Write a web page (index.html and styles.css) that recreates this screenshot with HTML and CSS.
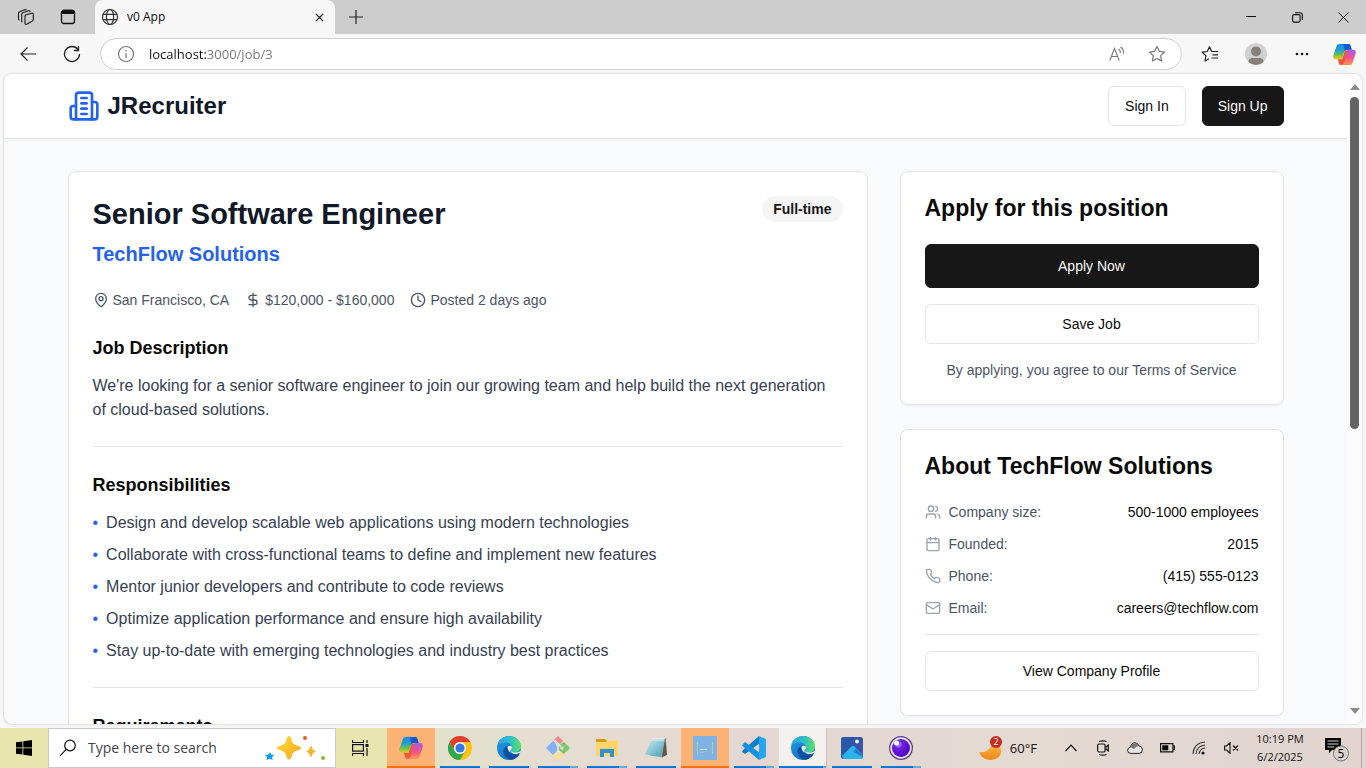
FILE: index.html
```html
<!DOCTYPE html>
<html lang="en">
<head>
<meta charset="utf-8">
<title>v0 App</title>
<link rel="stylesheet" href="styles.css">
</head>
<body>
<svg class="defs" aria-hidden="true">
  <defs>
    <linearGradient id="cpA" x1="0" y1="0" x2="0" y2="1"><stop offset="0" stop-color="#1489e8"/><stop offset=".4" stop-color="#1f9fd0"/><stop offset=".7" stop-color="#6dc04b"/><stop offset="1" stop-color="#f2c81e"/></linearGradient>
    <linearGradient id="cpB" x1="0" y1="1" x2="0" y2="0"><stop offset="0" stop-color="#ff9a4d"/><stop offset=".45" stop-color="#f6508a"/><stop offset="1" stop-color="#a35bf0"/></linearGradient>
    <linearGradient id="edA" x1="0" y1="0" x2="1" y2="0"><stop offset="0" stop-color="#2aa5e3"/><stop offset=".55" stop-color="#2fc0c8"/><stop offset="1" stop-color="#5fe05a"/></linearGradient>
    <linearGradient id="edB" x1="0" y1="0" x2="1" y2="1"><stop offset="0" stop-color="#1f9be4"/><stop offset="1" stop-color="#1166bd"/></linearGradient>
    <linearGradient id="note" x1="0" y1="0" x2="1" y2="1"><stop offset="0" stop-color="#d4eef2"/><stop offset="1" stop-color="#3d9db5"/></linearGradient>
    <linearGradient id="pic" x1="0" y1="0" x2="1" y2="1"><stop offset="0" stop-color="#1e5aa8"/><stop offset="1" stop-color="#4b4ca8"/></linearGradient>
    <linearGradient id="moon" x1="0" y1="0" x2="0" y2="1"><stop offset="0" stop-color="#f9c13c"/><stop offset="1" stop-color="#f0851c"/></linearGradient>
    <linearGradient id="gold" x1="0" y1="0" x2="1" y2="1"><stop offset="0" stop-color="#ffdc3d"/><stop offset="1" stop-color="#f3a71c"/></linearGradient>
    <radialGradient id="orb" cx=".35" cy=".3" r=".8"><stop offset="0" stop-color="#b9a0ff"/><stop offset=".3" stop-color="#6d1fe0"/><stop offset="1" stop-color="#4a00b8"/></radialGradient>
    <symbol id="copilot" viewBox="0 0 24 24">
      <path d="M15 22l-6.500 1c-1.500 0-2-.8-2.400-2L5 16.500h4.500l3-9H17z" fill="#f0563c"/>
      <path d="M7 1h9c1.500 0 2 .8 2.400 2l1.200 4H15c-2 0-2.800 1-3.300 2.600L9.500 17H3C.5 17-.3 15 .5 12.500L3.500 4C4.200 2 5 1 7 1z" fill="url(#cpA)"/>
      <path d="M11 1h5c1.500 0 2 .8 2.400 2l1.200 4H15c-1.300 0-2.200.5-2.700 1.300z" fill="#1259cf"/>
      <path d="M17 23H8c3 0 3.500-2 4.200-4.500l2.600-9C15.300 7.800 16 7 17.500 7H21c2.500 0 3.300 2 2.500 4.500L20.500 20c-.7 2-1.500 3-3.500 3z" fill="url(#cpB)"/>
    </symbol>
    <symbol id="edge" viewBox="0 0 24 24">
      <circle cx="12" cy="12" r="12" fill="url(#edB)"/>
      <path d="M.5 8.500C2 3.500 6.600 0 12 0c7 0 12 5 12 10.500 0 3.500-2.600 6-6 6-2.600 0-4-1-4-2 0-.8 1-1.200 1-3C15 8.500 12 6.500 8.500 6.500 5 6.500 2 7.500.5 8.500z" fill="url(#edA)"/>
      <path d="M9.500 10.500c-3 1.500-4 5-2.300 8.200 1.300 2.700 3.800 4.600 7 5.100 3.400-.6 6.400-2.700 8.300-5.600.3-.5-.2-.9-.8-.6-3.700 1.700-8 .9-10.200-2.100-1.200-1.500-1.500-3.400-.7-4.700z" fill="#0d4f9e"/>
      <path d="M14.500 12.500c-.8 1-1 3 .3 4.300 1.700 1.500 4.700 1.800 8.300 0l.7-2.300c-1.500 1.500-3.500 2-5.800 2-2.600 0-4-1-4-2 0-.6.500-1 .5-2z" fill="#f1f3ee"/>
      <path d="M10.500 11q2-2 4.400-.5.300 1.500-.9 3-1.200 1.500-.5 3-2.500-1.200-3-5.500z" fill="#f1f3ee"/>
    </symbol>
  </defs>
</svg>

<div class="tabstrip">
  <button class="strip-btn" aria-label="Workspaces"><svg width="18" height="18" viewBox="0 0 18 18" fill="none" stroke="#1b1b1b" stroke-width="1.100" stroke-linejoin="round"><path d="M8.500 7l6-1.800q1.800-.5 1.800 1.300v5q0 1-.9 1.600l-5.200 3Q8 17 8 15.200V8.500Q8 7.400 8.500 7zM5.300 14.300l-.6-.8V6.500q0-1.300 1.200-1.700l5.600-2q1.300-.3 1.800.9M2.300 12.300l-.8-.8v-6q0-1.300 1.200-1.700l4.800-2q1.500-.4 2.100.4"/></svg></button>
  <button class="strip-btn" aria-label="Tab actions"><svg width="16" height="16" viewBox="0 0 16 16" fill="none" stroke="#111" stroke-width="1.300"><rect x="1.500" y="1.500" width="13" height="13" rx="2.500"/><path d="M1.500 4q0-2.500 2.500-2.500h8q2.500 0 2.500 2.500v.3h-13z" fill="#111"/></svg></button>
  <div class="tab">
    <svg width="18" height="18" viewBox="0 0 18 18" fill="none" stroke="#333" stroke-width="1.200"><circle cx="9" cy="9" r="7.500"/><ellipse cx="9" cy="9" rx="3.600" ry="7.500"/><path d="M2 6.300h14M2 11.700h14"/></svg>
    <span class="tab-title">v0 App</span>
    <button class="icon-btn" aria-label="Close tab"><svg width="9" height="9" viewBox="0 0 10 10" stroke="#111" stroke-width="1.400"><path d="M1 1l8 8M9 1L1 9"/></svg></button>
  </div>
  <button class="strip-btn" aria-label="New tab"><svg width="14" height="14" viewBox="0 0 14 14" stroke="#222" stroke-width="1.200"><path d="M7 0v14M0 7h14"/></svg></button>
  <div class="window-btns">
    <button aria-label="Minimize"><svg width="10" height="10" viewBox="0 0 10 10" stroke="#111"><path d="M0 4.500h10"/></svg></button>
    <button aria-label="Restore"><svg width="11" height="11" viewBox="0 0 11 11" fill="none" stroke="#111" stroke-width="1.100"><rect x=".6" y="2.600" width="7.500" height="7.500" rx="1.500"/><path d="M3 .7h5q2.300 0 2.300 2.300v5"/></svg></button>
    <button aria-label="Close"><svg width="11" height="11" viewBox="0 0 11 11" stroke="#111"><path d="M.5.500l10 10M10.500.500l-10 10"/></svg></button>
  </div>
</div>

<div class="toolbar">
  <button class="nav-btn" aria-label="Back"><svg width="16" height="14" viewBox="0 0 16 14" fill="none" stroke="#222" stroke-width="1.200"><path d="M16 7H1M7.500.5L1 7l6.500 6.500"/></svg></button>
  <button class="nav-btn" aria-label="Refresh"><svg width="18" height="18" viewBox="0 0 18 18" fill="none" stroke="#222" stroke-width="1.300"><path d="M15 4.500A7.500 7.500 0 1 0 16.500 9M15.500 1v4.500H11"/></svg></button>
  <div class="address">
    <svg width="18" height="18" viewBox="0 0 18 18" fill="none" stroke="#777" stroke-width="1.200"><circle cx="9" cy="9" r="7.500"/><path d="M9 8v5M9 5v1.500"/></svg>
    <input class="url" type="text" aria-label="Address" value="localhost:3000/job/3">
    <button class="icon-btn" aria-label="Read aloud"><svg width="16" height="16" viewBox="0 0 16 16" fill="none" stroke="#777" stroke-width="1.100"><path d="M.8 14.500L5.500 2.500l4.700 12M2.500 10.500h6M9.500 3q2 1.200 2 4M11.500 1Q15 3.200 14.500 7.500"/></svg></button>
    <button class="icon-btn" aria-label="Add to favorites"><svg width="18" height="18" viewBox="0 0 18 18" fill="none" stroke="#777" stroke-width="1.200" stroke-linejoin="round"><path d="M9 1.500l2.300 4.800 5.200.7-3.800 3.600.9 5.400L9 13.500 4.400 16l.9-5.400L1.500 7l5.200-.7z"/></svg></button>
  </div>
  <div class="tools">
    <button aria-label="Favorites"><svg width="18" height="18" viewBox="0 0 18 18" fill="none" stroke="#222" stroke-width="1.200" stroke-linejoin="round"><path d="M17 6.500h-6.200L8.500 1.800 6.300 6.500 1.200 7.200l3.700 3.600-.9 5.200 4-2.200M11.500 9.800H17M10.500 13H17"/></svg></button>
    <button aria-label="Profile"><svg width="22" height="22" viewBox="0 0 22 22"><circle cx="11" cy="11" r="11" fill="#d2d0ce"/><circle cx="11" cy="8.500" r="5" fill="#85807c"/><path d="M3.500 19q0-4 3.500-4h8q3.500 0 3.500 4A11 11 0 0 1 3.500 19z" fill="#85807c"/></svg></button>
    <button aria-label="Settings and more"><svg width="14" height="4" viewBox="0 0 14 4" fill="#111"><circle cx="2" cy="2" r="1.300"/><circle cx="7" cy="2" r="1.300"/><circle cx="12" cy="2" r="1.300"/></svg></button>
    <button class="copilot-btn" aria-label="Copilot"><svg width="23" height="23"><use href="#copilot"/></svg></button>
  </div>
</div>

<div class="viewport">
  <div class="page">
    <header class="site-header">
      <div class="container header-row">
        <a class="brand" href="#"><svg class="lucide" width="32" height="32" viewBox="0 0 24 24"><path d="M6 22V4a2 2 0 0 1 2-2h8a2 2 0 0 1 2 2v18Z"/><path d="M6 12H4a2 2 0 0 0-2 2v6a2 2 0 0 0 2 2h2M18 9h2a2 2 0 0 1 2 2v9a2 2 0 0 1-2 2h-2M10 6h4M10 10h4M10 14h4M10 18h4"/></svg><span>JRecruiter</span></a>
        <div class="auth"><button class="btn">Sign In</button><button class="btn btn-dark">Sign Up</button></div>
      </div>
    </header>
    <main class="container layout">
      <article class="card job">
        <div class="job-head">
          <div><h1>Senior Software Engineer</h1><p class="company">TechFlow Solutions</p></div>
          <span class="badge">Full-time</span>
        </div>
        <ul class="meta">
          <li><svg class="lucide" width="16" height="16" viewBox="0 0 24 24"><path d="M20 10c0 4.993-5.539 10.193-7.399 11.799a1 1 0 0 1-1.202 0C9.539 20.193 4 14.993 4 10a8 8 0 0 1 16 0"/><circle cx="12" cy="10" r="3"/></svg>San Francisco, CA</li>
          <li><svg class="lucide" width="16" height="16" viewBox="0 0 24 24"><path d="M12 2v20M17 5H9.500a3.500 3.500 0 0 0 0 7h5a3.500 3.500 0 0 1 0 7H6"/></svg>$120,000 - $160,000</li>
          <li><svg class="lucide" width="16" height="16" viewBox="0 0 24 24"><circle cx="12" cy="12" r="10"/><path d="M12 6v6l4 2"/></svg>Posted 2 days ago</li>
        </ul>
        <section><h2>Job Description</h2><p>We're looking for a senior software engineer to join our growing team and help build the next generation of cloud-based solutions.</p></section>
        <hr>
        <section><h2>Responsibilities</h2>
          <ul class="bullets">
            <li>Design and develop scalable web applications using modern technologies</li>
            <li>Collaborate with cross-functional teams to define and implement new features</li>
            <li>Mentor junior developers and contribute to code reviews</li>
            <li>Optimize application performance and ensure high availability</li>
            <li>Stay up-to-date with emerging technologies and industry best practices</li>
          </ul>
        </section>
        <hr>
        <section><h2>Requirements</h2></section>
      </article>
      <aside class="side">
        <section class="card">
          <h2 class="card-title">Apply for this position</h2>
          <div class="actions">
            <button class="btn btn-dark btn-lg">Apply Now</button>
            <button class="btn">Save Job</button>
            <p class="terms">By applying, you agree to our Terms of Service</p>
          </div>
        </section>
        <section class="card">
          <h2 class="card-title">About TechFlow Solutions</h2>
          <dl class="facts">
            <div><dt><svg class="lucide" width="16" height="16" viewBox="0 0 24 24"><path d="M16 21v-2a4 4 0 0 0-4-4H6a4 4 0 0 0-4 4v2"/><circle cx="9" cy="7" r="4"/><path d="M22 21v-2a4 4 0 0 0-3-3.870M16 3.130a4 4 0 0 1 0 7.750"/></svg>Company size:</dt><dd>500-1000 employees</dd></div>
            <div><dt><svg class="lucide" width="16" height="16" viewBox="0 0 24 24"><path d="M8 2v4M16 2v4M3 10h18"/><rect width="18" height="18" x="3" y="4" rx="2"/></svg>Founded:</dt><dd>2015</dd></div>
            <div><dt><svg class="lucide" width="16" height="16" viewBox="0 0 24 24"><path d="M22 16.920v3a2 2 0 0 1-2.180 2 19.790 19.790 0 0 1-8.630-3.070 19.500 19.500 0 0 1-6-6 19.790 19.790 0 0 1-3.070-8.670A2 2 0 0 1 4.110 2h3a2 2 0 0 1 2 1.720 12.840 12.840 0 0 0 .7 2.810 2 2 0 0 1-.45 2.110L8.090 9.910a16 16 0 0 0 6 6l1.270-1.270a2 2 0 0 1 2.110-.45 12.840 12.840 0 0 0 2.810.7A2 2 0 0 1 22 16.920z"/></svg>Phone:</dt><dd>(415) 555-0123</dd></div>
            <div><dt><svg class="lucide" width="16" height="16" viewBox="0 0 24 24"><rect width="20" height="16" x="2" y="4" rx="2"/><path d="m22 7-8.970 5.700a1.940 1.940 0 0 1-2.060 0L2 7"/></svg>Email:</dt><dd>careers@techflow.com</dd></div>
          </dl>
          <hr class="tight">
          <button class="btn btn-wide">View Company Profile</button>
        </section>
      </aside>
    </main>
  </div>
  <div class="scrollbar" aria-hidden="true">
    <svg width="10" height="6" viewBox="0 0 10 6"><path d="M5 0l5 6H0z" fill="#8a8a8a"/></svg>
    <div class="track"><div class="thumb"></div></div>
    <svg width="10" height="6" viewBox="0 0 10 6"><path d="M0 0h10L5 6z" fill="#8a8a8a"/></svg>
  </div>
</div>

<footer class="taskbar">
  <button class="task-btn" aria-label="Start"><svg width="16" height="16" viewBox="0 0 16 16"><path d="M0 2.300L6.500 1.400v6.100H0zM7.300 1.300L16 0v7.500H7.300zM0 8.300h6.500v6.300L0 13.700zM7.300 8.300H16V16l-8.700-1.300z"/></svg></button>
  <label class="search">
    <svg width="18" height="18" viewBox="0 0 18 18" fill="none" stroke="#111" stroke-width="1.200"><circle cx="11" cy="6.500" r="5.300"/><path d="M7.200 10.300L1 16.800"/></svg>
    <input type="text" placeholder="Type here to search" aria-label="Type here to search">
    <svg width="62" height="26" viewBox="0 0 62 26"><path d="M24 1q2 0 3 5 1 3.500 5 4.500 4 1 4 2.500t-4 2.500q-4 1-5 4.500-1 4.500-3 4.500t-3-4.500q-1-3.500-5-4.500-4-1-4-2.500t4-2.500q4-1 5-4.500 1-5 3-5z" fill="url(#gold)"/><path d="M46 11q1 0 1.600 3 .4 1.200 3.400 2.500-3 1-3.400 2.500Q47 22 46 22t-1.600-3q-.4-1.500-3.400-2.500 3-1.300 3.400-2.500.6-3 1.600-3z" fill="#f7b52b"/><path d="M5 17l1.400 2.700 2.800.3-2 2 .3 3-3-1.300L1.500 25l.6-2.800L0 20l3.500-.5z" fill="#0f9de8"/><circle cx="40" cy="3" r="2" fill="#ee5a24"/><circle cx="58" cy="23" r="2" fill="#80c030"/></svg>
  </label>
  <button class="task-btn" aria-label="Task view"><svg width="17" height="16" viewBox="0 0 17 16" fill="none" stroke="#111" stroke-width="1.200"><path d="M.6 0v2.500h10.800V0M.6 16v-2.500h10.800V16"/><rect x=".6" y="4.600" width="10.800" height="6.500"/><path d="M15 0v3M15 8v8"/><path d="M13.500 4h3v3h-3z" fill="#111" stroke="none"/></svg></button>
  <div class="apps">
    <button class="app alert" aria-label="Copilot"><svg width="24" height="24"><use href="#copilot"/></svg></button>
    <button class="app run" aria-label="Chrome"><svg width="24" height="24" viewBox="0 0 24 24"><circle cx="12" cy="12" r="12" fill="#fbc116"/><path d="M1.600 6A12 12 0 0 1 22.400 6H12a6 6 0 0 0-5.200 9z" fill="#e33b2e"/><path d="M1.600 6l5.200 9a6 6 0 0 0 7.500 2.600L12 24A12 12 0 0 1 1.600 6z" fill="#2da94f"/><path d="M12 24l5.200-9L14.300 17.600z" fill="#2da94f"/><circle cx="12" cy="12" r="6" fill="#fff"/><circle cx="12" cy="12" r="4.600" fill="#3478e5"/></svg></button>
    <button class="app run" aria-label="Edge"><svg width="24" height="24"><use href="#edge"/></svg></button>
    <button class="app run multi" aria-label="Git Bash"><svg width="24" height="24" viewBox="0 0 24 24"><path d="M12 0l5 5-4 4-5-5z" fill="#f58686"/><path d="M7 5l5 5-1 7-4 2-7-7z" fill="#84b0fa"/><path d="M18 6l6 6-6 6-5-4V9z" fill="#7dc66c"/><path d="M12 14l6 5-6 5-5-5z" fill="#fbe08c"/><path d="M9 4.500l6 6M12 8v9" stroke="#e9e2da" stroke-width="1.600"/><circle cx="12" cy="9" r="1.700" fill="#e9e2da"/><circle cx="16" cy="12" r="1.700" fill="#e9e2da"/><circle cx="12" cy="17" r="1.700" fill="#e9e2da"/></svg></button>
    <button class="app run multi" aria-label="File Explorer"><svg width="22" height="20" viewBox="0 0 22 20"><path d="M0 1h9l2 2h10v6H0z" fill="#d9970e"/><path d="M0 4h10l1.500-1.500H22V18H0z" fill="#fdd667"/><path d="M4 19v-8h14v8h-4v-4H8v4z" fill="#2f8fd8"/></svg></button>
    <button class="app run" aria-label="Notepad"><svg width="24" height="24" viewBox="0 0 24 24"><path d="M9 3l13-1 1 16-5 4z" fill="#a89878"/><path d="M21 2l2 17-5 2z" fill="#5f5548"/><path d="M8 3h13l-4 18q-8 0-16-3z" fill="url(#note)"/><path d="M8 2.500h13M7 4h13" stroke="#e9e9e9"/></svg></button>
    <button class="app alert" aria-label="Editor"><svg width="24" height="24" viewBox="0 0 24 24"><path d="M0 0h24v24H0z" fill="#7fb3e3"/><path d="M4.500 6v12M19.500 6v12" stroke="#b2cc98"/><path d="M7 13.500h7" stroke="#d5e6f4"/><path d="M6.500 16.500h4" stroke="#97c1e7"/></svg></button>
    <button class="app run multi" aria-label="Visual Studio Code"><svg width="24" height="24" viewBox="0 0 24 24"><path d="M17 0l1 7L3 18l-3-2 1-2z" fill="#0a7dcb"/><path d="M3 6l15 11-1 7L0 9.500 1 8z" fill="#1390de"/><path d="M17 0l7 3v18l-7 3z" fill="#28a4ef"/></svg></button>
    <button class="app run multi active" aria-label="Edge, v0 App"><svg width="24" height="24"><use href="#edge"/></svg></button>
    <button class="app run" aria-label="Photos"><svg width="22" height="22" viewBox="0 0 22 22"><rect width="22" height="22" rx="2.500" fill="url(#pic)"/><path d="M1 19L10.500 9.500q1.500-1.500 3 0L22 18v1.500q0 2.500-2.500 2.500h-17z" fill="#28b5ee"/><path d="M12 15l3-3.500 7 6.500v2z" fill="#237fce"/><circle cx="16" cy="4.500" r="2" fill="#eef4fc"/></svg></button>
    <button class="app run multi" aria-label="Browser"><svg width="24" height="24" viewBox="0 0 24 24"><circle cx="12" cy="12" r="12" fill="#5b4388"/><circle cx="12" cy="12" r="10.700" fill="#e9e0f6"/><circle cx="12" cy="12" r="9" fill="url(#orb)"/><circle cx="7.500" cy="7" r="2.500" fill="#fff"/></svg></button>
  </div>
  <div class="tray">
    <button class="weather"><svg width="24" height="24" viewBox="0 0 24 24"><path d="M0 16q5 1 9-2 4-3 4-8 9 2 9 9 0 8-10 9Q3 24 0 16z" fill="url(#moon)"/><circle cx="17" cy="6" r="6" fill="#c42b1c"/><text x="17" y="9" text-anchor="middle" class="count">2</text></svg><span>60°F</span></button>
    <button class="tray-btn" aria-label="Show hidden icons"><svg width="12" height="8" viewBox="0 0 12 8" fill="none" stroke="#111" stroke-width="1.200"><path d="M.5 7L6 1.200 11.500 7"/></svg></button>
    <button class="tray-btn" aria-label="Meet now"><svg width="12" height="16" viewBox="0 0 12 16" fill="none" stroke="#111" stroke-width="1.200"><rect x=".6" y="4" width="7.500" height="8" rx="1.500"/><path d="M8.500 7.500L11.300 5v6L8.500 8.500M2 1.500q4-1.300 7.500 0M2 14.500q4 1.300 7.500 0"/></svg></button>
    <button class="tray-btn" aria-label="OneDrive"><svg width="16" height="12" viewBox="0 0 16 12"><path d="M4 11.400Q.6 11.400.6 8.300q0-2.500 2.700-3Q4.500.8 8 .8q3 0 4 3.200 3.400.3 3.400 3.700 0 3.700-3.400 3.700z" fill="#e9e7e5" stroke="#222"/><path d="M3.300 5.300Q4.500 1 8 1q3 0 4 3l-3 1-2 2z" fill="#777"/></svg></button>
    <button class="tray-btn" aria-label="Battery"><svg width="15" height="10" viewBox="0 0 15 10"><path d="M.6.600h12.300v8.300H.6zM13 3h1.500v3.500H13" fill="none" stroke="#111" stroke-width="1.200"/><path d="M2.300 2.300h6v5h-6z"/></svg></button>
    <button class="tray-btn" aria-label="Network"><svg width="14" height="14" viewBox="0 0 14 14" fill="none" stroke="#333" stroke-width="1.100"><path d="M1 13Q1.500 2 13 1M4 13Q4.500 5 13 4M7 13Q7.500 8 13 7"/><circle cx="11" cy="12" r="1.600" fill="#111" stroke="none"/></svg></button>
    <button class="tray-btn" aria-label="Volume muted"><svg width="15" height="12" viewBox="0 0 15 12" fill="none" stroke="#111" stroke-width="1.100"><path d="M.6 4h2L6 .8v10.400L2.600 8h-2zM9 3.500l5 5M14 3.500l-5 5"/></svg></button>
    <button class="clock"><span>10:19 PM</span><span>6/2/2025</span></button>
    <button class="notify" aria-label="Notifications"><svg width="26" height="28" viewBox="0 0 26 28"><path d="M1 4h16v12H8l-3 3v-3H1z"/><path d="M3.500 7h11M3.500 10h11M3.500 13h7" stroke="#ddd3ce" stroke-width="1.200"/><circle cx="17" cy="19.500" r="7.500" fill="#d9d2ce" stroke="#777"/><text x="17" y="24" text-anchor="middle" class="num">5</text></svg></button>
    <div class="desktop-edge"></div>
  </div>
</footer>
</body>
</html>
```
FILE: styles.css
```css
* { box-sizing: border-box; margin: 0; padding: 0; }
body {
  display: flex; flex-direction: column; height: 100vh; overflow: hidden;
  background: #f7f7f7; color: #0a0a0a;
  font-family: "Liberation Sans", Arial, sans-serif; font-size: 14px; line-height: 20px;
}
button { font: inherit; color: inherit; background: none; border: 0; display: flex; align-items: center; justify-content: center; }
input { font: inherit; border: 0; outline: 0; background: none; min-width: 0; }
ul { list-style: none; }
svg { flex: none; display: block; }
.defs { position: absolute; width: 0; height: 0; }
.lucide { fill: none; stroke: currentColor; stroke-width: 2; stroke-linecap: round; stroke-linejoin: round; }

.tabstrip, .toolbar, .taskbar { font-family: "Open Sans", "Noto Sans", sans-serif; flex: none; display: flex; }

.tabstrip { height: 34px; background: #cdcdcd; padding-left: 5px; }
.strip-btn { width: 42px; }
.tab { width: 240px; margin-left: 6px; padding: 0 7px 0 6px; display: flex; align-items: center; gap: 8px; background: #f7f7f7; border-radius: 8px 8px 0 0; font-size: 12px; }
.tab-title { flex: 1; }
.icon-btn { width: 18px; height: 18px; }
.window-btns { margin-left: auto; display: flex; }
.window-btns button { width: 46px; }

.toolbar { height: 40px; align-items: center; padding-left: 6px; }
.nav-btn { width: 44px; height: 32px; }
.address { flex: 1; height: 32px; margin-left: 6px; padding: 0 15px 0 16px; display: flex; align-items: center; gap: 14px; background: #fff; border: 1px solid #d0d0d0; border-radius: 16px; }
.url {
  flex: 1; font-size: 13px; color: transparent; caret-color: #111;
  background: linear-gradient(90deg, #111 58px, #767676 58px);
  -webkit-background-clip: text; background-clip: text;
}
.address .icon-btn + .icon-btn { margin-left: 8px; }
.tools { display: flex; padding-left: 5px; }
.tools button { width: 46px; height: 32px; }
.tools .copilot-btn { width: 38px; margin-right: 3px; }

.viewport { flex: 1; min-height: 0; margin: 0 4px 4px; display: flex; overflow: hidden; background: #f9fafb; border-radius: 8px; box-shadow: 0 0 2px rgba(0, 0, 0, .3); }
.page { flex: 1; min-width: 0; overflow: hidden; }
.scrollbar { width: 15px; padding: 10px 0; display: flex; flex-direction: column; align-items: center; gap: 7px; background: #fcfcfc; }
.track { flex: 1; width: 9px; }
.thumb { height: 55%; background: #636363; border-radius: 5px; }

.container { max-width: 1280px; margin: 0 auto; padding: 0 32px; }
.site-header { background: #fff; border-bottom: 1px solid #e5e7eb; box-shadow: 0 1px 2px rgba(0, 0, 0, .05); }
.header-row { height: 64px; display: flex; align-items: center; justify-content: space-between; }
.brand { display: flex; align-items: center; gap: 8px; color: #111827; font-size: 24px; line-height: 32px; font-weight: 700; text-decoration: none; }
.brand svg { color: #2563eb; }
.auth { display: flex; gap: 16px; }
.btn { height: 40px; padding: 0 16px; background: #fff; border: 1px solid #e5e5e5; border-radius: 6px; }
.btn-dark { background: #171717; border-color: #171717; color: #fafafa; }
.auth .btn-dark { padding: 0 15px; }
.btn-lg { height: 44px; }
.btn-wide { width: 100%; }

.layout { display: grid; grid-template-columns: repeat(3, 1fr); gap: 32px; align-items: start; padding-top: 32px; padding-bottom: 32px; }
.card { padding: 24px; background: #fff; border: 1px solid #e5e5e5; border-radius: 8px; box-shadow: 0 1px 2px rgba(0, 0, 0, .05); }
.job { grid-column: span 2; font-size: 16px; line-height: 24px; color: #374151; }
.job-head { display: flex; justify-content: space-between; align-items: flex-start; }
h1 { color: #111827; font-size: 29px; line-height: 36px; }
.company { margin-top: 8px; color: #2563eb; font-size: 20px; line-height: 28px; font-weight: 600; }
.badge { padding: 3px 11px; background: #f5f5f5; border-radius: 13px; color: #171717; font-size: 14px; line-height: 20px; font-weight: 600; }
.meta { display: flex; gap: 16px; margin: 22px 0 24px; color: #4b5563; font-size: 14px; line-height: 20px; }
.meta li { display: flex; align-items: center; gap: 4px; }
.job h2 { margin-bottom: 12px; color: #0a0a0a; font-size: 18px; line-height: 28px; }
hr { height: 1px; margin: 24px 0; border: 0; background: #e5e5e5; }
.bullets { display: grid; gap: 8px; }
.bullets li { display: flex; gap: 8px; }
.bullets li::before { content: "•"; color: #2563eb; }

.side { display: grid; gap: 24px; }
.card-title { font-size: 23px; line-height: 24px; margin-bottom: 24px; }
.actions { display: grid; gap: 16px; }
.terms { color: #4b5563; text-align: center; }
.facts { display: grid; gap: 12px; }
.facts div { display: flex; justify-content: space-between; }
.facts dt { display: flex; align-items: center; gap: 8px; color: #4b5563; }
.facts svg { color: #9ca3af; }
.tight { margin: 16px 0; }

.taskbar { height: 40px; color: #111; background: linear-gradient(90deg, #e8e5ad 0, #e7e5b0 28%, #e2e1cc 33%, #e5dcd2 42%, #e4d7d2 55%, #e4dad2 75%, #e1d4cf 100%); }
.task-btn { width: 48px; }
.search { width: 288px; padding: 0 8px 0 10px; display: flex; align-items: center; gap: 11px; background: #fff; border: 1px solid #c9c9c9; }
.search input { flex: 1; font-size: 14px; }
.search input::placeholder { color: #444; opacity: 1; }
.apps { display: flex; gap: 1px; margin-left: 3px; }
.app { width: 48px; background: linear-gradient(#0078d7, #0078d7) center bottom / 40px 2px no-repeat; }
.app.multi { background: linear-gradient(90deg, #0078d7 32px, #66a9dd 32px) center bottom / 40px 2px no-repeat; }
.app.alert { background: #fbb274; border-bottom: 2px solid #ff6f00; padding-top: 2px; }
.app.active { background: linear-gradient(90deg, #0078d7 45px, #66a9dd 45px) center bottom / 48px 2px no-repeat #f4f0ed; border-right: 1px solid #c9bfba; }
.tray { margin-left: auto; display: flex; }
.weather { gap: 7px; padding-right: 18px; font-size: 13px; }
.count { font-size: 9px; fill: #fff; }
.tray-btn { width: 32px; }
.clock { width: 66px; flex-direction: column; font-size: 11px; line-height: 18px; }
.notify { width: 48px; }
.num { font-size: 12px; }
.desktop-edge { width: 5px; border-left: 1px solid #b5aaa6; }
```
